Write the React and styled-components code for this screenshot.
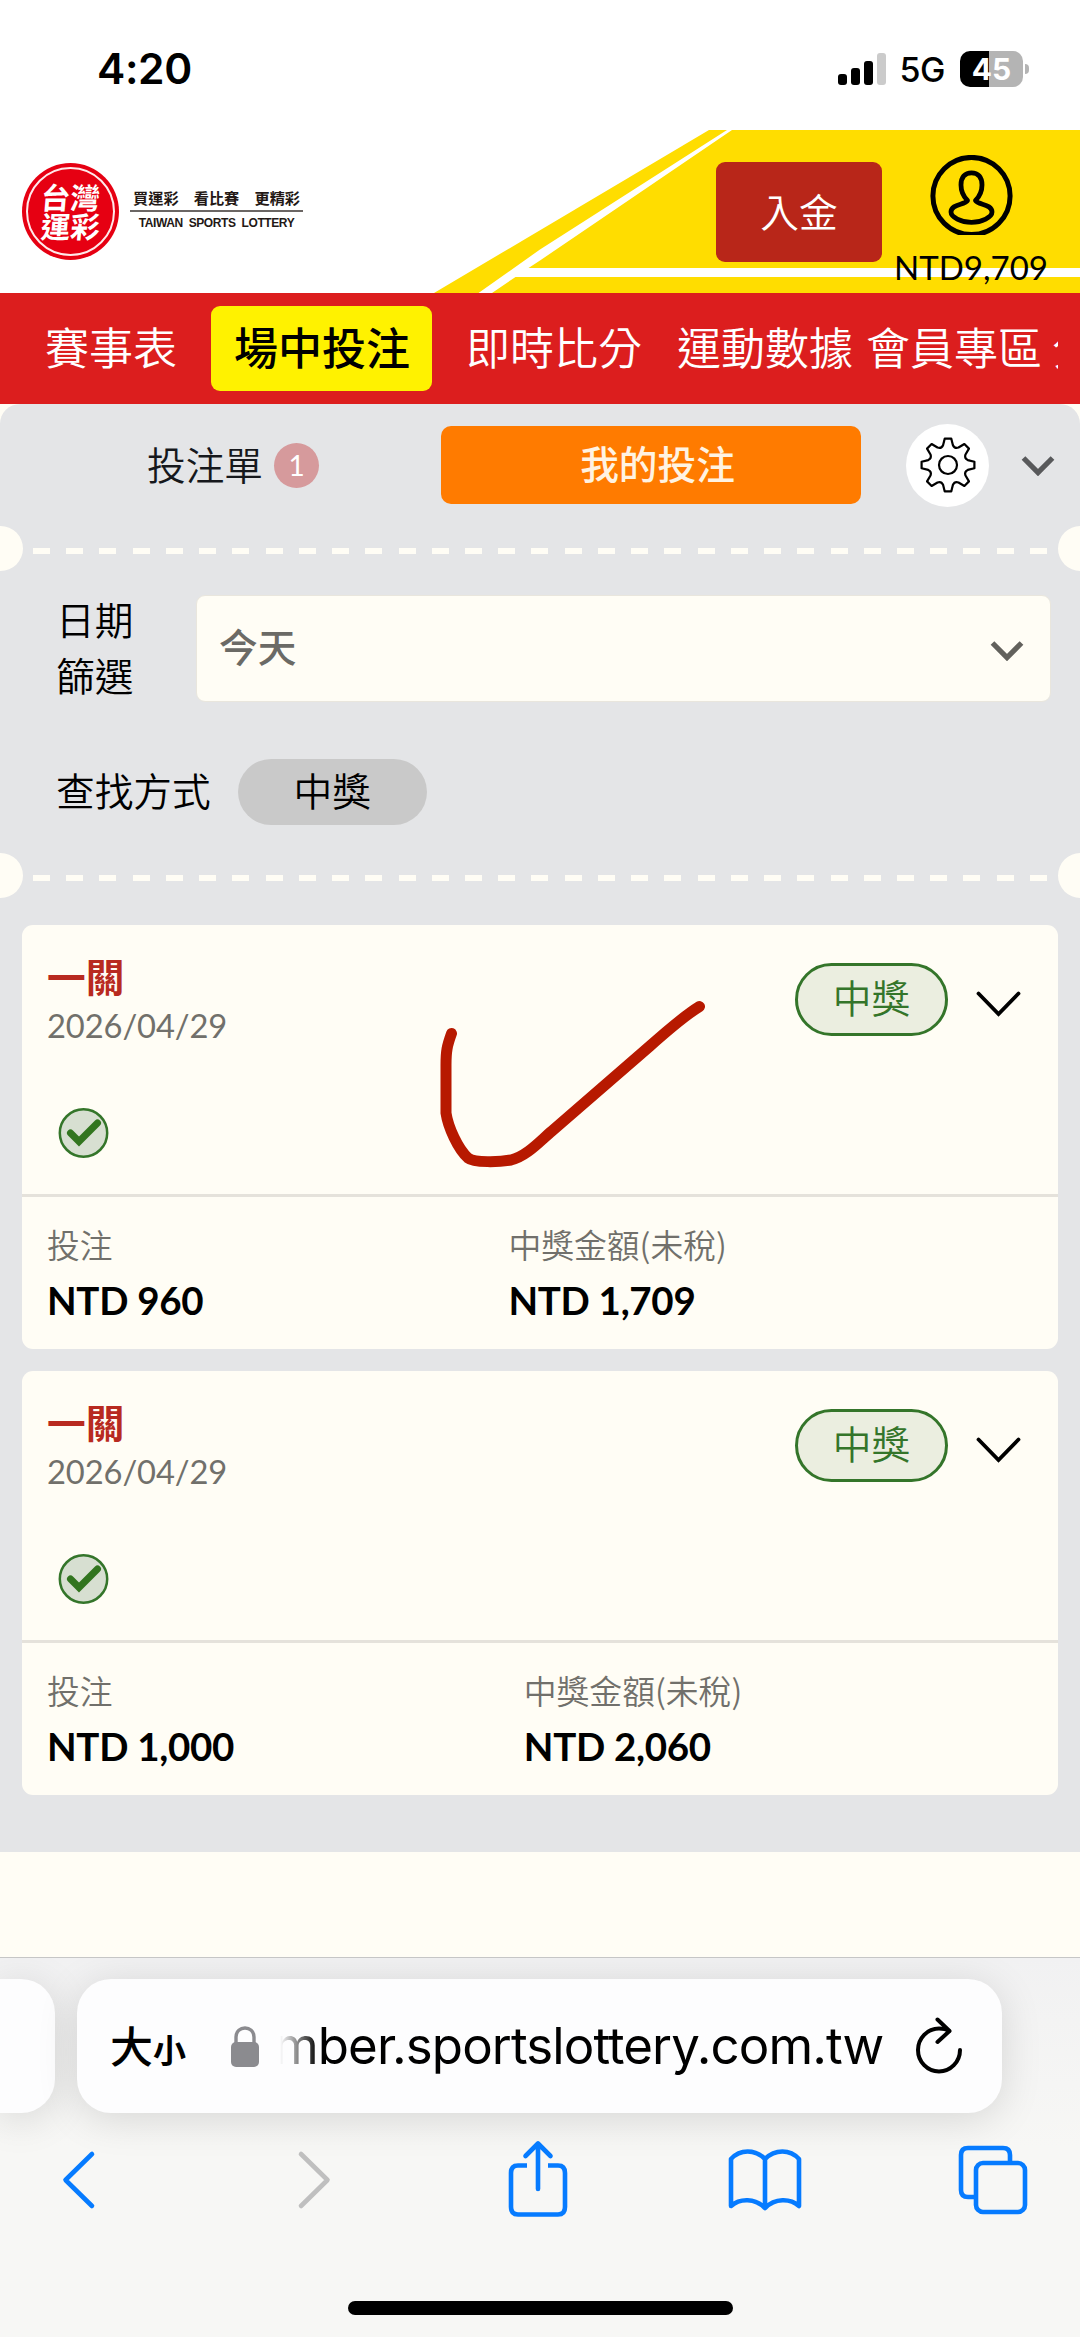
import React from 'react';
import styled, { createGlobalStyle } from 'styled-components';

const cream = '#fffdf5';
const grey = '#e4e5e7';
const green = '#34752a';
const blue = '#067bff';

const GlobalStyle = createGlobalStyle`
  * {
    box-sizing: border-box;
  }

  body {
    margin: 0;
    background: #fff;
    font-family: Lato, 'Noto Sans CJK TC', sans-serif;
    color: #000;
  }
`;

const Screen = styled.div`
  width: 1080px;
  height: 2337px;
  display: flex;
  flex-direction: column;
  overflow: hidden;
  background: ${cream};
`;

/* ---------- status bar ---------- */

const StatusBar = styled.div`
  height: 130px;
  padding: 7px 51px 0 97px;
  display: flex;
  align-items: center;
  background: #fff;
  font-family: Inter, sans-serif;
`;

const Clock = styled.span`
  flex: 1;
  font-size: 42.5px;
  font-weight: 600;
  line-height: 50px;
  letter-spacing: -0.4px;
`;

const Network = styled.span`
  margin: 3px 15px 0 14px;
  font-size: 34px;
  font-weight: 500;
  line-height: 40px;
  letter-spacing: -0.5px;
`;

const Battery = styled.div`
  width: 63px;
  height: 36px;
  border-radius: 10px;
  background: linear-gradient(to right, #000 46%, #b4b4b4 46%);
  color: #fff;
  font-size: 30px;
  font-weight: 700;
  line-height: 36px;
  text-align: center;
`;

const BatteryTip = styled.div`
  width: 4px;
  height: 10px;
  margin-left: 2px;
  border-radius: 0 4px 4px 0;
  background: #b4b4b4;
`;

/* ---------- header ---------- */

const Header = styled.header`
  display: grid;
  height: 163px;
  background: #fff;
`;

const Stripes = styled.svg`
  grid-area: 1 / 1;
  display: block;
`;

const HeaderRow = styled.div`
  grid-area: 1 / 1;
  display: flex;
  align-items: flex-start;
  padding: 0 29px 0 22px;
`;

const Seal = styled.div`
  width: 97px;
  height: 97px;
  margin-top: 33px;
  padding: 4px;
  border-radius: 50%;
  background: #e60012;
`;

const SealRing = styled.div`
  width: 89px;
  height: 89px;
  border: 2px solid #ffe9ea;
  border-radius: 50%;
  display: flex;
  flex-direction: column;
  align-items: center;
  justify-content: center;
  color: #fff;
  font-size: 29.5px;
  font-weight: 700;
  line-height: 29px;
`;

const SealText = styled.span`
  transform: skewX(-5deg);
`;

const Slogan = styled.div`
  width: 173px;
  margin: 58px 0 0 11px;
  color: #231815;
`;

const SloganZh = styled.div`
  display: flex;
  justify-content: space-between;
  height: 24px;
  padding: 0 3px;
  border-bottom: 2px solid #6b6664;
  font-size: 15.2px;
  font-weight: 700;
  line-height: 20px;
`;

const SloganEn = styled.div`
  font-family: 'Liberation Sans', sans-serif;
  font-size: 12px;
  font-weight: 700;
  line-height: 22px;
  text-align: center;
  word-spacing: 3px;
  letter-spacing: -0.4px;
  white-space: nowrap;
`;

const Deposit = styled.button`
  width: 166px;
  height: 100px;
  margin: 32px 0 0 auto;
  padding: 0 0 4px;
  border: none;
  border-radius: 9px;
  background: #b82619;
  color: #fff;
  font-family: inherit;
  font-size: 38.7px;
  font-weight: 350;
`;

const Account = styled.div`
  width: 160px;
  margin-left: 9px;
  padding-top: 25px;
  display: flex;
  flex-direction: column;
  align-items: center;
`;

const Balance = styled.span`
  margin-top: 15px;
  font-size: 33px;
  line-height: 34px;
`;

/* ---------- navigation ---------- */

const Nav = styled.nav`
  height: 111px;
  padding: 0 22px 0 21px;
  background: #dc1e1e;
`;

const NavScroll = styled.div`
  height: 111px;
  display: flex;
  align-items: center;
  overflow: hidden;
`;

const NavItem = styled.a`
  flex: none;
  height: 85px;
  padding: 0 ${(props) => props.$right}px 0 ${(props) => props.$left}px;
  border-radius: 9px;
  background: ${(props) => (props.$active ? '#fff200' : 'transparent')};
  color: ${(props) => (props.$active ? '#000' : '#fff')};
  font-size: 44px;
  font-weight: ${(props) => (props.$active ? 500 : 350)};
  line-height: 85px;
`;

/* ---------- bet slip panel ---------- */

const Panel = styled.main`
  height: 1448px;
  border-radius: 20px 20px 0 0;
  background: ${grey};
`;

const Tabs = styled.div`
  height: 122px;
  padding-right: 25px;
  display: flex;
  align-items: center;
`;

const SlipTab = styled.div`
  width: 319px;
  margin-left: 122px;
  padding-left: 25px;
  display: flex;
  align-items: center;
  font-size: 38.7px;
  font-weight: 350;
  line-height: 76px;
  color: #16181c;
`;

const Count = styled.span`
  width: 45px;
  height: 45px;
  margin-left: 11px;
  border-radius: 50%;
  background: #d69a9c;
  color: #fff;
  font-size: 28px;
  font-weight: 400;
  line-height: 45px;
  text-align: center;
`;

const MyBetsTab = styled.div`
  width: 420px;
  height: 78px;
  padding-left: 13px;
  border-radius: 10px;
  background: #ff7b00;
  color: #fff3e2;
  font-size: 38.7px;
  font-weight: 500;
  line-height: 76px;
  text-align: center;
`;

const GearButton = styled.div`
  width: 83px;
  height: 83px;
  margin: 0 32px 0 45px;
  border-radius: 50%;
  background: #fff;
  display: flex;
  align-items: center;
  justify-content: center;
`;

const Perforation = styled.div`
  height: 45px;
  display: flex;
  justify-content: space-between;
  overflow: hidden;

  &::before,
  &::after {
    content: '';
    width: 45px;
    height: 45px;
    border-radius: 50%;
    background: ${cream};
  }

  &::before {
    margin-left: -22.5px;
  }

  &::after {
    margin-right: -22.5px;
  }
`;

const Dashes = styled.div`
  width: 1014px;
  height: 6px;
  margin-top: 22px;
  background: repeating-linear-gradient(
    to right,
    ${cream} 0 17px,
    transparent 17px 33.23px
  );
`;

const Filters = styled.div`
  height: 282px;
  padding: 21px 29px 0 56px;
  font-size: 38.7px;
  font-weight: 350;
`;

const FilterRow = styled.div`
  display: flex;
  align-items: center;
  margin-bottom: 55px;
`;

const DateLabel = styled.div`
  width: 140px;
  padding-right: 60px;
  line-height: 56px;
`;

const DateSelect = styled.div`
  flex: 1;
  height: 107px;
  padding: 0 26px 0 22px;
  border: 1px solid #e9e6dd;
  border-radius: 9px;
  background: ${cream};
  color: #6b6a65;
  font-weight: 500;
  line-height: 100px;
  display: flex;
  align-items: center;
  justify-content: space-between;

  svg {
    margin-top: 3px;
  }
`;

const SelectedDate = styled.span`
  margin-top: -3px;
`;

const FindLabel = styled.span`
  line-height: 64px;
  margin-top: -2px;
`;

const Chip = styled.span`
  width: 189px;
  height: 66px;
  margin-left: 27px;
  border-radius: 33px;
  background: #c9c9c9;
  line-height: 64px;
  text-align: center;
`;

const BetList = styled.div`
  padding: 27px 22px 0;
  display: flex;
  flex-direction: column;
  gap: 22px;
`;

const Card = styled.article`
  position: relative;
  height: 424px;
  border-radius: 11px;
  background: ${cream};
`;

const CardTop = styled.div`
  height: 272px;
  padding: 27px 37px 0 25px;
  border-bottom: 3px solid #e5e2db;
  display: flex;
  align-items: flex-start;
`;

const CardInfo = styled.div`
  flex: 1;
`;

const BetKind = styled.div`
  color: #b82a20;
  font-size: 38.7px;
  font-weight: 700;
  line-height: 50px;
`;

const BetDate = styled.div`
  margin: 4px 0 62px;
  color: #71706b;
  font-size: 32.7px;
  line-height: 40px;
  letter-spacing: -0.1px;
`;

const ResultIcon = styled.svg`
  display: block;
  margin-left: 11px;
`;

const ResultTag = styled.span`
  width: 153px;
  height: 73px;
  margin-top: 11px;
  border: 3px solid ${green};
  border-radius: 37px;
  background: #ebeee0;
  color: ${green};
  font-size: 38.7px;
  font-weight: 350;
  line-height: 65px;
  text-align: center;
`;

const Expand = styled.svg`
  margin: 38px 0 0 27px;
`;

const Amounts = styled.div`
  display: flex;
  padding: 27px 26px 0 25px;
`;

const Amount = styled.div`
  flex: 1 1 auto;
`;

const AmountLabel = styled.div`
  color: #71706b;
  font-family: 'Noto Sans CJK TC', sans-serif;
  font-size: 32.8px;
  font-weight: 350;
  line-height: 40px;
  white-space: nowrap;
`;

const AmountValue = styled.div`
  margin-top: 13px;
  font-size: 38.5px;
  font-weight: 700;
  line-height: 46px;
  letter-spacing: -0.3px;
`;

const Scribble = styled.svg`
  position: absolute;
  left: 410px;
  top: 65px;
`;

/* ---------- browser chrome ---------- */

const Browser = styled.footer`
  flex: 1;
  margin-top: 105px;
  border-top: 1px solid #c6c6c6;
  background: linear-gradient(#f1f1f2, #f7f7f5 50%);
  overflow: hidden;
`;

const TabStrip = styled.div`
  display: flex;
  gap: 22px;
  padding-top: 21px;
`;

const PreviousTab = styled.div`
  width: 55px;
  height: 134px;
  border-radius: 0 34px 34px 0;
  background: #fdfdfe;
  box-shadow: 0 6px 40px rgba(0, 0, 0, 0.13);
`;

const AddressBar = styled.div`
  width: 925px;
  height: 134px;
  padding: 0 39px 0 33px;
  border-radius: 34px;
  background: #fdfdfe;
  box-shadow: 0 6px 40px rgba(0, 0, 0, 0.13);
  display: flex;
  align-items: center;
`;

const TextSize = styled.span`
  width: 121px;
  font-family: 'Noto Sans CJK TC', sans-serif;
  font-size: 43px;
  font-weight: 500;
  line-height: 60px;

  small {
    font-size: 33px;
    font-weight: 700;
  }
`;

const Url = styled.span`
  flex: 1;
  margin-left: 15px;
  font-family: Inter, sans-serif;
  font-size: 51px;
  line-height: 64px;
  letter-spacing: -0.9px;
  white-space: nowrap;
  mask-image: linear-gradient(to right, transparent 6px, #000 44px);
`;

const Toolbar = styled.div`
  height: 134px;
  padding-left: 61px;
  display: flex;
  align-items: center;
`;

const ToolIcon = styled.svg`
  flex: none;
  margin-left: ${(props) => props.$gap || 0}px;
  fill: none;
  stroke: ${(props) => (props.$disabled ? '#bfbfbf' : blue)};
  stroke-width: 4.6;
  stroke-linecap: round;
  stroke-linejoin: round;
`;

const HomeIndicator = styled.div`
  width: 385px;
  height: 14px;
  margin: 54px auto 0;
  border-radius: 7px;
  background: #000;
`;

const polar = (deg, r) => {
  const a = (deg * Math.PI) / 180;
  return `${(30 + r * Math.sin(a)).toFixed(2)} ${(30 - r * Math.cos(a)).toFixed(2)}`;
};

// eight teeth, with a shallow curve between each pair
const gearPath = () => {
  let d = `M${polar(-7, 26.6)}`;
  for (let i = 0; i < 8; i++) {
    const a = i * 45;
    d += `L${polar(a + 7, 26.6)}L${polar(a + 14, 20.4)}`;
    d += `Q${polar(a + 22.5, 17.4)} ${polar(a + 31, 20.4)}L${polar(a + 38, 26.6)}`;
  }
  return `${d}Z`;
};

const Gear = () => (
  <svg width="60" height="60" viewBox="0 0 60 60" fill="none" stroke="#000" strokeWidth="2.2" strokeLinejoin="round">
    <path d={gearPath()} />
    <circle cx="30" cy="30" r="9" />
  </svg>
);

const Chevron = ({ color }) => (
  <svg width="34" height="22" viewBox="0 0 34 22" fill="none" stroke={color} strokeWidth="5.2">
    <path d="M2.5 4 17 18.6 31.5 4" />
  </svg>
);

const Signal = () => (
  <svg width="48" height="32" viewBox="0 0 48 32">
    <rect x="0" y="21" width="9" height="11" rx="3" />
    <rect x="13" y="15" width="9" height="17" rx="3" />
    <rect x="26" y="8" width="9" height="24" rx="3" />
    <rect x="39" y="0" width="9" height="32" rx="3" fill="#cbcbcb" />
  </svg>
);

const Avatar = () => (
  <svg width="83" height="80" viewBox="0 0 83 80" fill="none" stroke="#000" strokeWidth="5">
    <circle cx="41.5" cy="41" r="38.6" />
    <path
      d="M37.5 45.500C33 41 31 36 31 30C31 22 35 17.800 41.500 17.800S52 22 52 30C52 36 50 41 45.500 45.500C48 50 62 49 62 57C62 62 52 67.300 41.500 67.300S21 62 21 57C21 49 35 50 37.500 45.500Z"
      strokeWidth="4.8"
      strokeLinejoin="round"
    />
  </svg>
);

const navItems = [
  { label: '賽事表', left: 24, right: 34 },
  { label: '場中投注', left: 23, right: 22 },
  { label: '即時比分', left: 34, right: 17 },
  { label: '運動數據', left: 18, right: 6 },
  { label: '會員專區', left: 7, right: 4 },
  { label: '分', left: 6, right: 0 },
];

const bets = [
  { id: 1, kind: '一關', date: '2026/04/29', stake: 'NTD 960', payout: 'NTD 1,709', marked: true },
  { id: 2, kind: '一關', date: '2026/04/29', stake: 'NTD 1,000', payout: 'NTD 2,060' },
];

const BetCard = ({ bet }) => (
  <Card>
    <CardTop>
      <CardInfo>
        <BetKind>{bet.kind}</BetKind>
        <BetDate>{bet.date}</BetDate>
        <ResultIcon width="51" height="50" viewBox="0 0 51 50" fill="none" stroke={green}>
          <circle cx="25.500" cy="25" r="23.700" fill="#d7dfd1" strokeWidth="2.5" />
          <path d="M12.500 25 21 33.500 39.500 15" strokeWidth="7" stroke="#32751f" strokeLinecap="round" />
        </ResultIcon>
      </CardInfo>
      <ResultTag>中獎</ResultTag>
      <Expand width="46" height="28" viewBox="0 0 46 28" fill="none" stroke="#000" strokeWidth="3.8">
        <path d="M3.500 3.500 23.500 24 43.500 3.500" strokeLinecap="round" />
      </Expand>
    </CardTop>
    <Amounts>
      <Amount>
        <AmountLabel>投注</AmountLabel>
        <AmountValue>{bet.stake}</AmountValue>
      </Amount>
      <Amount>
        <AmountLabel>中獎金額(未稅)</AmountLabel>
        <AmountValue>{bet.payout}</AmountValue>
      </Amount>
    </Amounts>
    {bet.marked && (
      <Scribble width="290" height="190" viewBox="432 989 290 190" fill="none" stroke="#b71900">
        <path
          d="M451.500 1032.500C447 1045 446 1050 446 1064V1112C448 1126 458 1148 468 1157 474 1162 500 1161 511 1159 527 1155 540 1140 552 1130L650 1045C668 1029 684 1015 699.500 1005.500"
          strokeWidth="11"
          strokeLinecap="round"
        />
      </Scribble>
    )}
  </Card>
);

const App = () => {
  const current = '場中投注';

  return (
    <Screen>
      <GlobalStyle />
      <StatusBar>
        <Clock>4:20</Clock>
        <Signal />
        <Network>5G</Network>
        <Battery>45</Battery>
        <BatteryTip />
      </StatusBar>

      <Header>
        <Stripes width="1080" height="163" viewBox="0 0 1080 163">
          <path d="M709 0H1080V163H434z" fill="#ffdd00" />
          <path d="M727 0H732L540 130.500 528.500 138H1080V147H515.500L492 163H478.500L540 119.500z" fill="#fff" />
        </Stripes>
        <HeaderRow>
          <Seal>
            <SealRing>
              <SealText>台灣</SealText>
              <SealText>運彩</SealText>
            </SealRing>
          </Seal>
          <Slogan>
            <SloganZh>
              <span>買運彩</span>
              <span>看比賽</span>
              <span>更精彩</span>
            </SloganZh>
            <SloganEn>TAIWAN SPORTS LOTTERY</SloganEn>
          </Slogan>
          <Deposit>入金</Deposit>
          <Account>
            <Avatar />
            <Balance>NTD9,709</Balance>
          </Account>
        </HeaderRow>
      </Header>

      <Nav>
        <NavScroll>
          {navItems.map((item) => (
            <NavItem
              key={item.label}
              $left={item.left}
              $right={item.right}
              $active={item.label === current}
            >
              {item.label}
            </NavItem>
          ))}
        </NavScroll>
      </Nav>

      <Panel>
        <Tabs>
          <SlipTab>
            投注單
            <Count>1</Count>
          </SlipTab>
          <MyBetsTab>我的投注</MyBetsTab>
          <GearButton>
            <Gear />
          </GearButton>
          <Chevron color="#58595b" />
        </Tabs>
        <Perforation>
          <Dashes />
        </Perforation>
        <Filters>
          <FilterRow>
            <DateLabel>日期篩選</DateLabel>
            <DateSelect>
              <SelectedDate>今天</SelectedDate>
              <Chevron color="#62615c" />
            </DateSelect>
          </FilterRow>
          <FilterRow>
            <FindLabel>查找方式</FindLabel>
            <Chip>中獎</Chip>
          </FilterRow>
        </Filters>
        <Perforation>
          <Dashes />
        </Perforation>
        <BetList>
          {bets.map((bet) => (
            <BetCard key={bet.id} bet={bet} />
          ))}
        </BetList>
      </Panel>

      <Browser>
        <TabStrip>
          <PreviousTab />
          <AddressBar>
            <TextSize>
              大<small>小</small>
            </TextSize>
            <svg width="28" height="41" viewBox="0 0 28 41" fill="#8b8b8f">
              <rect x="0" y="16" width="28" height="25" rx="5" />
              <path d="M5 18V11c0-12 18-12 18 0v7" fill="none" stroke="#8b8b8f" strokeWidth="3.400" />
            </svg>
            <Url>mber.sportslottery.com.tw</Url>
            <svg width="48" height="58" viewBox="0 0 48 58" fill="none" stroke="#000" strokeWidth="4" strokeLinecap="round" strokeLinejoin="round">
              <path d="M45 33A21 21.500 0 1 1 24 11.500C28 11.500 32 12.500 34 14" />
              <path d="M22.500 2.500 34.500 14 22.500 25" />
            </svg>
          </AddressBar>
        </TabStrip>
        <Toolbar>
          <ToolIcon width="35" height="60" viewBox="0 0 35 60">
            <path d="M31 4 4.500 30 31 56" />
          </ToolIcon>
          <ToolIcon width="35" height="60" viewBox="0 0 35 60" $gap={201} $disabled>
            <path d="M4 4 30.500 30 4 56" />
          </ToolIcon>
          <ToolIcon width="62" height="80" viewBox="0 0 62 80" $gap={175}>
            <path d="M20 25.500H11Q4 25.500 4 33V67Q4 74.500 11 74.500H51Q58 74.500 58 67V33Q58 25.500 51 25.500H41" strokeLinecap="butt" />
            <path d="M31 49V4M18.500 16 31 3.500 43.500 16" />
          </ToolIcon>
          <ToolIcon width="76" height="64" viewBox="0 0 76 64" $gap={158}>
            <path d="M38 11C28 1 13 1 4 11V58C13 50 28 50 38 60 48 50 63 50 72 58V11C63 1 48 1 38 11ZM38 11V60" />
          </ToolIcon>
          <ToolIcon width="72" height="72" viewBox="0 0 72 72" $gap={154}>
            <path d="M17.500 53H11Q4 53 4 46V11Q4 4 11 4H46Q53 4 53 11V18" strokeLinecap="butt" />
            <rect x="19" y="19" width="49" height="49" rx="7" />
          </ToolIcon>
        </Toolbar>
        <HomeIndicator />
      </Browser>
    </Screen>
  );
};

export default App;
